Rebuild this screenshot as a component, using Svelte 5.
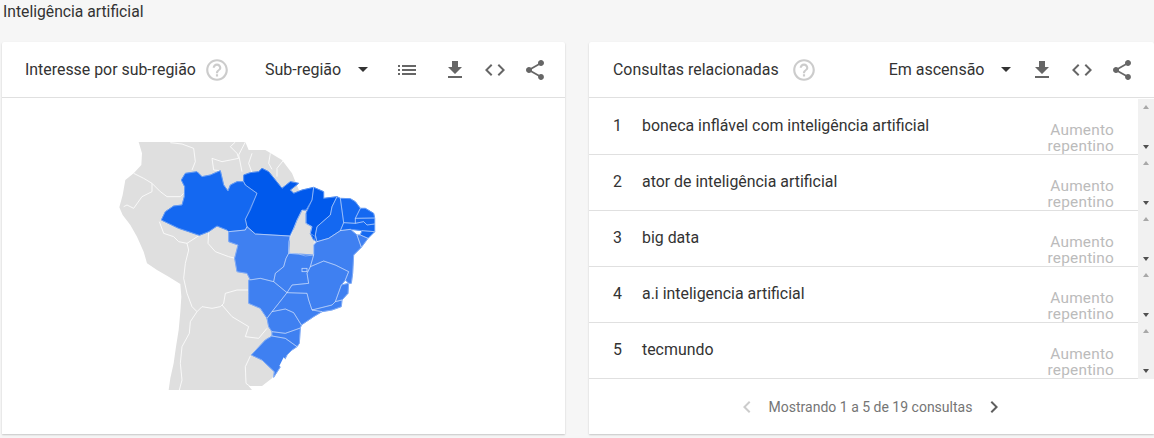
<script>
  const rows = [
    'boneca inflável com inteligência artificial',
    'ator de inteligência artificial',
    'big data',
    'a.i inteligencia artificial',
    'tecmundo'
  ];
  const P = {
    help: 'M11 18h2v-2h-2v2zm1-16C6.48 2 2 6.48 2 12s4.48 10 10 10 10-4.48 10-10S17.52 2 12 2zm0 18c-4.41 0-8-3.59-8-8s3.59-8 8-8 8 3.59 8 8-3.59 8-8 8zm0-14c-2.21 0-4 1.79-4 4h2c0-1.1.9-2 2-2s2 .9 2 2c0 2-3 1.75-3 5h2c0-2.25 3-2.5 3-5 0-2.21-1.79-4-4-4z',
    list: 'M3 13h2v-2H3v2zm0 4h2v-2H3v2zm0-8h2V7H3v2zm4 4h14v-2H7v2zm0 4h14v-2H7v2zM7 7v2h14V7H7z',
    download: 'M19 9h-4V3H9v6H5l7 7 7-7zM5 18v2h14v-2H5z',
    code: 'M9.4 16.6L4.8 12l4.6-4.6L8 6l-6 6 6 6 1.4-1.4zm5.2 0l4.6-4.6-4.6-4.6L16 6l6 6-6 6-1.4-1.4z',
    share: 'M18 16.08c-.76 0-1.44.3-1.96.77L8.91 12.7c.05-.23.09-.46.09-.7s-.04-.47-.09-.7l7.05-4.11c.54.5 1.25.81 2.04.81 1.66 0 3-1.34 3-3s-1.34-3-3-3-3 1.34-3 3c0 .24.04.47.09.7L8.04 9.81C7.5 9.31 6.79 9 6 9c-1.66 0-3 1.34-3 3s1.34 3 3 3c.79 0 1.5-.31 2.04-.81l7.12 4.16c-.05.21-.08.43-.08.65 0 1.61 1.31 2.92 2.92 2.92 1.61 0 2.92-1.31 2.92-2.92s-1.31-2.92-2.92-2.92z'
  };
  const grey = 'M110,36 L120,70 118,105 95,130 70,150 62,195 52,232 62,255 85,285 105,320 125,365 135,400 165,420 200,440 235,462 238,500 235,545 230,600 222,650 215,700 205,745 200,780 450,780 440,768 480,768 510,745 530,715 520,400 640,300 570,130 540,90 490,60 440,60 430,36 Z';
  const borders = [
    '205,38 240,42 275,55 280,95 270,120',
    '400,36 385,50 405,70 410,85 385,90 360,95 330,85 335,120 355,122',
    '430,36 410,75 420,125',
    '450,70 440,100 450,128',
    '505,70 500,100 510,118',
    '545,90 525,115 525,140',
    '95,130 125,145 150,160 175,185 195,200 235,200 245,190',
    '150,160 150,185 120,200 95,235 75,225 65,230',
    '172,275 185,310 215,320 230,335 255,340 292,316',
    '255,340 260,360 250,400 245,445 255,490 270,530 285,545',
    '320,305 318,340 340,365 380,380 400,385',
    '285,545 300,530 330,535 355,530 365,520 370,490 405,480 440,480',
    '360,525 390,560 440,590 430,620 470,625 495,595',
    '285,545 265,575 262,610 240,650 235,700 240,750 232,780',
    '445,678 430,710 432,760 445,770'
  ];
  const mid = '#1468f1', dark = '#0059ec', light = '#3f80f1', land = '#dfdfdf';
  const states = [
    [land, '600,240 612,250 612,280 630,290 625,310 640,320 635,345 635,375 610,378 590,372 560,370 560,335 575,295 585,270'],
    [mid, '178,270 190,245 215,228 240,225 247,200 248,170 238,150 250,130 285,125 300,140 325,135 355,122 365,165 378,183 385,165 405,155 425,155 430,165 465,190 445,240 430,268 435,290 430,300 380,305 375,300 345,288 320,305 292,316 260,305 230,295'],
    [dark, '425,155 425,135 445,128 470,125 480,115 500,125 520,150 540,175 565,155 590,160 565,180 575,190 600,180 635,172 630,210 612,240 600,240 585,270 575,295 563,318 460,312 435,290 430,268 465,190 430,165'],
    [dark, '635,172 665,185 665,205 705,200 690,230 685,255 645,290 640,315 645,335 635,330 625,310 630,290 612,280 612,250 630,210'],
    [mid, '705,200 715,205 725,278 715,302 680,325 645,335 640,315 645,290 685,255 690,230'],
    [mid, '715,205 745,206 760,215 775,235 760,265 760,280 725,278'],
    [mid, '775,235 790,235 815,250 818,264 760,265'],
    [mid, '760,265 818,264 818,282 795,285 785,275 760,280'],
    [mid, '725,278 760,280 785,275 795,285 818,282 818,305 780,302 745,298 715,302'],
    [mid, '780,302 818,305 798,325 775,315'],
    [light, '765,315 775,315 798,325 778,352'],
    [light, '635,345 645,335 680,325 715,302 745,298 765,315 778,352 755,375 752,430 748,460 740,460 730,450 740,425 700,405 665,393 625,410 635,375'],
    [light, '380,305 430,300 435,290 460,312 563,318 560,370 552,385 545,410 520,430 515,455 475,445 445,450 435,430 405,425 398,385 408,345 380,335'],
    [light, '560,370 590,372 635,375 625,410 615,430 620,460 570,465 555,488 515,455 520,430 545,410 552,385'],
    [light, '625,410 665,393 700,405 740,425 730,450 718,465 700,515 690,525 630,540 620,510 615,490 555,488 570,465 620,460 615,430'],
    [light, '718,465 740,460 738,490 720,510 700,515'],
    [light, '630,540 690,525 700,515 720,510 718,530 690,540 660,545'],
    [light, '440,450 475,445 515,455 555,488 530,520 510,545 495,565 475,535 440,520 440,490'],
    [light, '555,488 615,490 620,510 630,540 660,545 635,560 598,585 575,548 550,537 510,545 530,520'],
    [light, '510,545 550,537 575,548 598,585 595,594 550,610 510,605 500,590 495,565'],
    [light, '510,605 550,610 595,594 592,640 585,650 550,625 510,618'],
    [light, '510,618 550,625 585,650 570,660 555,675 545,695 515,742 517,725 480,690 448,675 490,630']
  ];
</script>

{#snippet icon(d, cls)}
  <svg class={cls} viewBox="0 0 24 24"><path {d} /></svg>
{/snippet}

<div class="page">
  <h1 class="topic">Inteligência artificial</h1>
  <main class="cards">
    <section class="card left">
      <header class="head">
        <span class="title">Interesse por sub-região</span>
        {@render icon(P.help, 'help')}
        <span class="select s1">Sub-região</span>
        <span class="tri"></span>
        {@render icon(P.list, 'ic list')}
        {@render icon(P.download, 'ic dl')}
        {@render icon(P.code, 'ic')}
        {@render icon(P.share, 'ic')}
      </header>
      <div class="map">
        <svg viewBox="-300 -96 1689 1008" class="mapsvg">
          <path d={grey} fill={land} />
          {#each borders as b}
            <polyline points={b} fill="none" stroke="#fff" stroke-width="2.4" stroke-linejoin="round" />
          {/each}
          {#each states as s}
            <polygon points={s[1]} fill={s[0]} stroke={s[0]} stroke-width="3" stroke-linejoin="round" />
          {/each}
          {#each states as s}
            <polygon points={s[1]} fill="none" stroke="#fff" stroke-opacity="0.5" stroke-width="2" stroke-linejoin="round" />
          {/each}
          <rect x="600" y="415" width="15" height="10" fill={light} stroke="#fff" stroke-opacity="0.7" stroke-width="2.4" />
          <path d="M545,682 L552,690 538,712 532,708 Z" fill="#fff" />
        </svg>
      </div>
    </section>

    <section class="card right">
      <header class="head">
        <span class="title">Consultas relacionadas</span>
        {@render icon(P.help, 'help')}
        <span class="select s2">Em ascensão</span>
        <span class="tri"></span>
        {@render icon(P.download, 'ic dl2')}
        {@render icon(P.code, 'ic')}
        {@render icon(P.share, 'ic')}
      </header>
      <ul class="rows">
        {#each rows as r, i}
          <li class="row">
            <div class="cell">
              <span class="rank">{i + 1}</span>
              <span class="label">{r}</span>
              <span class="value">Aumento repentino</span>
            </div>
            <div class="bar"><i class="up"></i><i class="down"></i></div>
          </li>
        {/each}
      </ul>
      <footer class="foot">
        <svg class="chev off" viewBox="0 0 24 24"><path d="M15.41 7.41L14 6l-6 6 6 6 1.41-1.41L10.83 12z" /></svg>
        <span>Mostrando 1 a 5 de 19 consultas</span>
        <svg class="chev" viewBox="0 0 24 24"><path d="M10 6L8.59 7.41 13.17 12l-4.58 4.59L10 18l6-6z" /></svg>
      </footer>
    </section>
  </main>
</div>

<style>
  :global(body) { margin: 0; background: #f6f6f6; overflow: hidden; }
  .page { width: 1154px; height: 438px; font-family: Roboto, sans-serif; color: #333; -webkit-font-smoothing: antialiased; }
  .topic { margin: 0; padding: 3px 0 0 3px; height: 42px; box-sizing: border-box; font-size: 15.7px; line-height: 17px; font-weight: 400; color: #333; }
  .cards { display: flex; gap: 24px; padding-left: 2px; }
  .card { background: #fff; height: 392px; border-radius: 2px 2px 0 0; box-shadow: 0 1px 2px rgba(0,0,0,.2); display: flex; flex-direction: column; }
  .left { width: 563px; }
  .right { width: 565px; }
  .head { display: flex; align-items: center; height: 55px; flex: none; border-bottom: 1px solid #e0e0e0; padding-left: 23px; box-sizing: content-box; }
  .right .head { padding-left: 24px; }
  .title { font-size: 15.9px; white-space: nowrap; color: #333; }
  .help { width: 26px; height: 26px; fill: #ccc; margin-left: 8px; flex: none; }
  .right .help { margin-left: 12px; }
  .select { font-size: 16px; color: #333; white-space: nowrap; }
  .s1 { margin-left: 35px; }
  .s2 { margin-left: 72px; }
  .tri { width: 0; height: 0; border: 5px solid transparent; border-top-color: #333; border-bottom: 0; margin-left: 17px; flex: none; }
  .ic { width: 24px; height: 24px; fill: #666; margin-left: 16px; flex: none; }
  .ic.list { margin-left: 27px; }
  .ic.list + .ic { margin-left: 24px; }
  .ic.dl2 { margin-left: 19px; }
  .map { flex: 1; min-height: 0; }
  .mapsvg { display: block; width: 563px; height: 336px; }
  .rows { list-style: none; margin: 0; padding: 1px 0 0; flex: none; }
  .row { display: flex; height: 56px; }
  .cell { flex: 1; display: flex; position: relative; border-bottom: 1px solid #e0e0e0; padding-left: 24px; font-size: 15.9px; color: #333; box-sizing: border-box; }
  .rank { width: 29px; margin-top: 18px; line-height: 17px; }
  .label { flex: 1; margin-top: 18px; line-height: 17px; }
  .value { width: 72px; margin: 23px 24px 0 0; font-size: 15.4px; line-height: 16px; color: #bbb; text-align: right; letter-spacing: .2px; }
  .bar { width: 16px; background: #f1f1f1; display: flex; flex-direction: column; justify-content: space-between; align-items: center; padding: 6px 0 6px; box-sizing: border-box; }
  .up, .down { width: 0; height: 0; border: 3.5px solid transparent; }
  .up { border-bottom: 4px solid #a8a8a8; border-top: 0; }
  .down { border-top: 4px solid #505050; border-bottom: 0; }
  .foot { flex: 1; display: flex; align-items: center; justify-content: center; gap: 10px; font-size: 14px; color: #757575; padding-right: 2px; }
  .chev { width: 24px; height: 24px; fill: #5f5f5f; }
  .chev.off { fill: #ccc; }
</style>
